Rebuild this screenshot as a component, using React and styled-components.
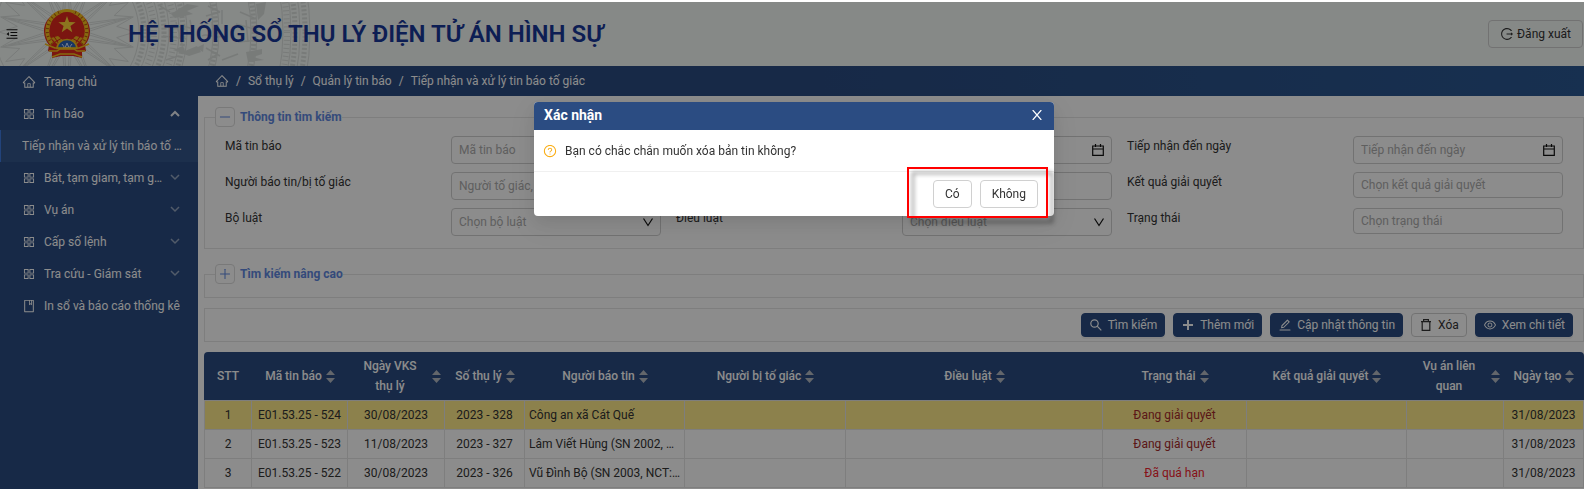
import React from "react";
import styled, { createGlobalStyle, css } from "styled-components";
import {
  AiOutlineMenuFold,
  AiOutlineHome,
  AiOutlineAppstore,
  AiOutlineBook,
  AiOutlineLogout,
  AiOutlinePlus,
  AiOutlineMinus,
  AiOutlineEdit,
  AiOutlineEye,
  AiOutlineQuestionCircle,
} from "react-icons/ai";

const color = {
  primary: "#2b4c82",
  line: "#e6e6e6",
  control: "#d0d0d0",
  text: "#333333",
  hint: "#adadad",
};

const GlobalStyle = createGlobalStyle`
  *, *::before, *::after { box-sizing: border-box; }
  body { margin: 0; background: #fff; }
  body, button, input, select {
    font-family: Roboto, "Liberation Sans", sans-serif;
    font-size: 12px;
    line-height: 20px;
    color: ${color.text};
  }
  svg { display: block; flex: none; }
`;

const Page = styled.div`
  min-height: 100vh;
  display: flex;
  flex-direction: column;
  padding-top: 2px;
`;

/* ---------- header ---------- */

const Header = styled.header`
  position: relative;
  display: flex;
  align-items: center;
  height: 64px;
  padding: 0 1px 0 5px;
  background: #f4f9f6;
  overflow: hidden;
`;

const DrumArt = styled.svg`
  position: absolute;
  left: 0;
  top: 0;
`;

const IconButton = styled.button`
  position: relative;
  display: flex;
  padding: 0;
  border: 0;
  background: none;
  color: #111;
`;

const Emblem = styled.svg`
  position: relative;
  margin: 0 37px 0 24px;
`;

const Title = styled.h1`
  position: relative;
  flex: 1;
  margin: 0;
  font-size: 24px;
  line-height: 32px;
  font-weight: 600;
  color: #183899;
`;

const Button = styled.button`
  display: inline-flex;
  align-items: center;
  justify-content: center;
  gap: ${(p) => (p.$small ? 5 : 3)}px;
  height: ${(p) => (p.$small ? 24 : 28)}px;
  padding: 0 ${(p) => (p.$small ? 7 : 11)}px;
  border: 1px solid ${color.control};
  border-radius: 4px;
  background: #fff;
  color: ${color.text};
  white-space: nowrap;
  ${(p) =>
    p.$primary &&
    css`
      border-color: ${color.primary};
      background: ${color.primary};
      color: #fff;
      box-shadow: 0 2px 0 rgba(0, 0, 0, 0.05);
    `}
  ${(p) => p.$clear && "background: transparent;"}
`;

/* ---------- sidebar ---------- */

const Body = styled.div`
  flex: 1;
  display: flex;
`;

const Sidebar = styled.nav`
  flex: none;
  width: 198px;
  background: ${color.primary};
`;

const MenuItem = styled.a`
  display: flex;
  align-items: center;
  gap: 8px;
  height: 32px;
  padding: 0 ${(p) => (p.$active ? 14 : 18)}px 0 21px;
  border-left: 1px solid ${(p) => (p.$active ? "#3f7be0" : "transparent")};
  background: ${(p) => (p.$active ? "#34568b" : "transparent")};
  color: #fff;
  text-decoration: none;
`;

const MenuText = styled.span`
  flex: 1;
  min-width: 0;
  overflow: hidden;
  text-overflow: ellipsis;
  white-space: nowrap;
`;

/* ---------- content ---------- */

const Main = styled.main`
  flex: 1;
  min-width: 0;
`;

const Breadcrumb = styled.nav`
  display: flex;
  align-items: center;
  gap: 7px;
  height: 30px;
  padding: 0 17px;
  background: linear-gradient(90deg, #2b4c82 45%, #2b5892);
  color: #fff;

  a {
    color: inherit;
    text-decoration: none;
  }
`;

const Content = styled.div`
  padding: 11px 0 0 6px;
`;

const Section = styled.fieldset`
  min-width: 0;
  margin: 0 0 ${(p) => (p.$closed ? 10 : 15)}px;
  padding: ${(p) => (p.$closed ? "0 10px 13px" : "9px 10px 12px")};
  border: 1px solid ${color.line};
`;

const Legend = styled.legend`
  display: flex;
  align-items: center;
  gap: 5px;
  height: 20px;
  padding: 0;
  font-weight: 700;
  color: #6088e0;
`;

const Toggle = styled.button`
  display: flex;
  align-items: center;
  justify-content: center;
  width: 20px;
  height: 20px;
  padding: 0;
  border: 1px solid #dcdcdc;
  border-radius: 4px;
  background: transparent;
  color: #6088e0;
`;

const FormGrid = styled.div`
  display: grid;
  grid-template-columns: repeat(3, minmax(0, 1fr));
  grid-auto-rows: 28px;
  gap: 8px 15px;
  padding: 0 10px;
`;

const Field = styled.div`
  display: grid;
  grid-template-columns: repeat(2, minmax(0, 1fr));
  align-items: start;
  gap: 16px;
`;

const Control = styled.div`
  grid-column: 2;
  display: flex;
  align-items: center;
  height: ${(p) => (p.$short ? 26 : 28)}px;
  padding: 0 7px 0 0;
  border: 1px solid ${color.control};
  border-radius: 4px;
  color: #111;
`;

const controlReset = css`
  flex: 1;
  min-width: 0;
  padding: 0 0 0 7px;
  border: 0;
  outline: 0;
  background: none;
`;

const Input = styled.input`
  ${controlReset}
  &::placeholder { color: ${color.hint}; opacity: 1; }
`;

const Select = styled.select`
  ${controlReset}
  appearance: none;
  color: ${color.hint};
`;

const Toolbar = styled.div`
  display: flex;
  justify-content: flex-end;
  gap: 8px;
  margin-bottom: 10px;
  padding: 4px 10px;
  border: 1px solid ${color.line};
`;

/* ---------- table ---------- */

const Table = styled.table`
  width: 100%;
  table-layout: fixed;
  border-collapse: separate;
  border-spacing: 0;
`;

const Th = styled.th`
  height: 49px;
  padding: 0 4px;
  border-bottom: 1px solid ${color.line};
  background: ${color.primary};
  background-clip: padding-box;
  color: #fff;
  font-weight: 500;
  text-align: center;
  &:first-child { border-top-left-radius: 4px; }
  &:last-child { border-top-right-radius: 4px; }
`;

const HeadCell = styled.div`
  display: flex;
  align-items: center;
  justify-content: center;
  gap: 4px;
`;

const Row = styled.tr`
  background: ${(p) => (p.$selected ? "#ffec8b" : "transparent")};
`;

const Td = styled.td`
  height: 29px;
  padding: 0 4px;
  border-right: 1px solid ${color.line};
  border-bottom: 1px solid ${color.line};
  text-align: ${(p) => (p.$left ? "left" : "center")};
  color: ${(p) => p.$tone || color.text};
  overflow: hidden;
  text-overflow: ellipsis;
  white-space: nowrap;
  &:first-child { border-left: 1px solid ${color.line}; }
`;

/* ---------- dialog ---------- */

const Backdrop = styled.div`
  position: fixed;
  inset: 2px 0 0;
  display: flex;
  align-items: flex-start;
  justify-content: center;
  padding: 100px 0 0 4px;
  background: rgba(0, 0, 0, 0.45);
`;

const Dialog = styled.section`
  position: relative;
  width: 520px;
  border-radius: 4px;
  background: #fff;
  box-shadow: 0 6px 16px rgba(0, 0, 0, 0.08), 0 9px 28px 8px rgba(0, 0, 0, 0.05);
`;

const DialogHead = styled.header`
  display: flex;
  align-items: center;
  justify-content: space-between;
  height: 28px;
  padding: 0 12px 2px 10px;
  border-radius: 4px 4px 0 0;
  background: ${color.primary};
  color: #fff;

  h2 {
    margin: 0;
    font-size: 14px;
    line-height: 20px;
    font-weight: 700;
  }
  button { color: #fff; }
`;

const DialogBody = styled.div`
  display: flex;
  align-items: center;
  gap: 8px;
  height: 42px;
  padding: 0 9px;
  border-bottom: 1px solid #f0f0f0;

  svg { color: #faad14; }
  p { margin: 0; }
`;

const DialogFoot = styled.footer`
  display: flex;
  justify-content: flex-end;
  gap: 8px;
  padding: 8px 16px;
`;

const Highlight = styled.div`
  position: absolute;
  right: 6px;
  bottom: -2px;
  width: 141px;
  height: 51px;
  border: 2px solid #f00;
  filter: drop-shadow(5px 5px 2px rgba(0, 0, 0, 0.45));
  pointer-events: none;
`;

/* ---------- drawings ---------- */

const Chevron = ({ up }) => (
  <svg width="10" height="10" viewBox="0 0 10 10" fill="none" stroke="currentColor" strokeWidth={up ? 2 : 1.5} opacity={up ? 0.9 : 0.5}>
    <path d={up ? "M1 7l4-4 4 4" : "M1 2l4 4 4-4"} />
  </svg>
);

const SelectArrow = () => (
  <svg width="10" height="10" viewBox="0 0 10 10" fill="none" stroke="currentColor" strokeWidth="1.200">
    <path d="M.5 1.500L5 8.500l4.500-7" />
  </svg>
);

const CloseIcon = () => (
  <svg width="10" height="10" viewBox="0 0 10 10" fill="none" stroke="currentColor" strokeWidth="1.200">
    <path d="M.7 0l8.600 10M9.300 0L.7 10" />
  </svg>
);

const SearchIcon = () => (
  <svg width="14" height="14" viewBox="0 0 14 14" fill="none" stroke="currentColor" strokeWidth="1.200">
    <circle cx="5.500" cy="5.500" r="3.700" />
    <path d="M8.200 8.200l4.100 4.100" />
  </svg>
);

const PlusIcon = () => (
  <svg width="14" height="14" viewBox="0 0 14 14" fill="none" stroke="currentColor" strokeWidth="2">
    <path d="M7 2v10M2 7h10" />
  </svg>
);

const CalendarIcon = () => (
  <svg width="12" height="12" viewBox="0 0 12 12" fill="none" stroke="currentColor" strokeWidth="1.200">
    <path d="M.7 2h10.600v9.300H.7zM.7 5h10.600M3.500 0v3M8.500 0v3" />
  </svg>
);

const TrashIcon = () => (
  <svg width="14" height="14" viewBox="0 0 14 14" fill="none" stroke="currentColor" strokeWidth="1.200">
    <path d="M2 3.600h10M4.600 3.400V1.600h4.800v1.800M3.200 3.600v8.800h7.600V3.600" />
  </svg>
);

const Sorter = () => (
  <svg width="9" height="13" viewBox="0 0 9 13" fill="#b4bac4">
    <path d="M4.500 0L9 5H0zM4.500 13L9 8H0z" />
  </svg>
);

const starPath = (cx, cy, outer, inner, points) => {
  const step = Math.PI / points;
  return (
    Array.from({ length: points * 2 }, (_, i) => {
      const r = i % 2 ? inner : outer;
      const a = i * step - Math.PI / 2;
      return `${i ? "L" : "M"}${(cx + r * Math.cos(a)).toFixed(1)} ${(cy + r * Math.sin(a)).toFixed(1)}`;
    }).join("") + "Z"
  );
};

const Drum = () => (
  <DrumArt width="316" height="64" viewBox="0 0 316 64" fill="none" stroke="#8f9391" opacity="0.24" aria-hidden="true">
    <path d={starPath(67, 30, 66, 20, 14)} />
    <path d={starPath(67, 30, 60, 12, 14)} />
    <path d={starPath(67, 30, 68, 50, 28)} />
    {[72, 82, 92, 102, 112, 120, 146, 152, 184, 190, 216, 224, 233, 243].map((r) => (
      <circle key={r} cx="67" cy="30" r={r} />
    ))}
    {[77, 97, 116, 149, 187, 228, 238].map((r) => (
      <circle key={r} cx="67" cy="30" r={r} strokeWidth="5" strokeDasharray="2 2" />
    ))}
    {[87, 107, 220].map((r) => (
      <circle key={r} cx="67" cy="30" r={r} strokeWidth="6" strokeDasharray="1 3" />
    ))}
    <g stroke="none" fill="#8f9391">
      <path d="M171 12l16-10 12 2-12 5 6 3-18 4zM173 48l10-4 2 5 12-5 4 6-12 4-10-4zM196 46l8-4-1 8zM246 50l16-3v5l-9 3 11 3-16 2zM256 2l10-2-2 12-6 6z" />
    </g>
    <g strokeWidth="1.500">
      <path d="M164 24c8 4 16-2 26 2M163 34l24 3M202 34c6-4 12 4 20 0M236 22l22 6M238 40l20-2M160 4l10 6M166 58l12-4M222 58l16-6M208 4l12 6M206 14l14-4M206 46l14 8M208 58l10-6M240 10l14 6M222 8v14M176 20l6 22M190 18l4 20M212 20l2 20M246 18l2 22" />
    </g>
  </DrumArt>
);

const NationalEmblem = () => (
  <Emblem width="48" height="50" viewBox="0 0 48 50" role="img" aria-label="Quốc huy Việt Nam">
    <path d="M24 1C11 1 1 11 1 22c0 6 2 10 5 14l-1 6 4 1v6l9-2h12l9 2v-6l4-1-1-6c3-4 5-8 5-14C47 11 37 1 24 1z" fill="#e0281e" />
    <path d="M9 35A20.500 20.500 0 0 1 17 3M39 35A20.500 20.500 0 0 0 31 3" fill="none" stroke="#f6c21c" strokeWidth="4" />
    <path d="M9 35A20.500 20.500 0 0 1 17 3M39 35A20.500 20.500 0 0 0 31 3" fill="none" stroke="#b85c10" strokeWidth="3" strokeDasharray="1 3" />
    <path d="M17 3q7-3 14 0" fill="none" stroke="#f6c21c" strokeWidth="3" />
    <path d={starPath(24, 16, 9, 3.6, 5)} fill="#ffd83a" />
    <path d="M8 29l7-2 6 5-7 3zM40 29l-7-2-6 5 7 3z" fill="#f2b51b" />
    <path d="M10 26l6 9M38 26l-6 9M12 33l7-4M36 33l-7-4" stroke="#d9241c" />
    <path d="M14 39.500a10 9 0 0 1 20 0z" fill="#2f63b5" stroke="#f6c21c" strokeWidth="1.500" />
    <path d="M19 35l3 4 2-5 2 5 3-4M20 38.500h8" fill="none" stroke="#d8e6ff" />
    <path d="M2 35l10 4h24l10-4M6 42h8l3-2h14l3 2h8M9 48l8-3h14l8 3" fill="none" stroke="#f6c21c" strokeWidth="1.500" />
  </Emblem>
);

/* ---------- data ---------- */

const menu = [
  { text: "Trang chủ", icon: AiOutlineHome },
  { text: "Tin báo", icon: AiOutlineAppstore, arrow: "up" },
  { text: "Tiếp nhận và xử lý tin báo tố giác", active: true },
  { text: "Bắt, tạm giam, tạm giữ", icon: AiOutlineAppstore, arrow: "down" },
  { text: "Vụ án", icon: AiOutlineAppstore, arrow: "down" },
  { text: "Cấp số lệnh", icon: AiOutlineAppstore, arrow: "down" },
  { text: "Tra cứu - Giám sát", icon: AiOutlineAppstore, arrow: "down" },
  { text: "In sổ và báo cáo thống kê", icon: AiOutlineBook },
];

const crumbs = ["Sổ thụ lý", "Quản lý tin báo", "Tiếp nhận và xử lý tin báo tố giác"];

const fields = [
  { id: "code", label: "Mã tin báo", hint: "Mã tin báo" },
  { id: "from", name: "Tiếp nhận từ ngày", date: true },
  { id: "to", label: "Tiếp nhận đến ngày", hint: "Tiếp nhận đến ngày", date: true },
  { id: "person", label: "Người báo tin/bị tố giác", hint: "Người tố giác, bị tố giác" },
  { id: "number", name: "Số thụ lý" },
  { id: "result", label: "Kết quả giải quyết", hint: "Chọn kết quả giải quyết", select: true, short: true },
  { id: "law", label: "Bộ luật", hint: "Chọn bộ luật", select: true, arrow: true },
  { id: "article", label: "Điều luật", hint: "Chọn điều luật", select: true, arrow: true },
  { id: "status", label: "Trạng thái", hint: "Chọn trạng thái", select: true, short: true },
];

const columns = [
  { title: "STT", width: 48, plain: true },
  { title: "Mã tin báo", width: 96 },
  { title: "Ngày VKS thụ\u00a0lý", width: 97 },
  { title: "Số thụ lý", width: 80 },
  { title: "Người báo tin", width: 160 },
  { title: "Người bị tố giác", width: 161 },
  { title: "Điều luật" },
  { title: "Trạng thái", width: 144 },
  { title: "Kết quả giải quyết", width: 160 },
  { title: "Vụ án liên quan", width: 97 },
  { title: "Ngày tạo", width: 80 },
];

const brown = "#a52a2a";
const red = "#f5222d";

const rows = [
  { code: "E01.53.25 - 524", date: "30/08/2023", no: "2023 - 328", name: "Công an xã Cát Quế", status: "Đang giải quyết", tone: brown, created: "31/08/2023" },
  { code: "E01.53.25 - 523", date: "11/08/2023", no: "2023 - 327", name: "Lâm Viết Hùng (SN 2002, NCT: Hà Nội)", status: "Đang giải quyết", tone: brown, created: "31/08/2023" },
  { code: "E01.53.25 - 522", date: "30/08/2023", no: "2023 - 326", name: "Vũ Đình Bộ (SN 2003, NCT: Hà Nội)", status: "Đã quá hạn", tone: red, created: "31/08/2023" },
];

const FormField = ({ id, label, name, hint, select, date, short, arrow }) => (
  <Field>
    {label && <label htmlFor={id}>{label}</label>}
    <Control $short={short}>
      {select ? (
        <Select id={id} defaultValue="">
          <option value="">{hint}</option>
        </Select>
      ) : (
        <Input id={id} type="text" placeholder={hint} aria-label={name} />
      )}
      {date && <CalendarIcon />}
      {arrow && <SelectArrow />}
    </Control>
  </Field>
);

export default function App() {
  return (
    <>
      <GlobalStyle />
      <Page>
        <Header>
          <Drum />
          <IconButton type="button" aria-label="Thu gọn menu">
            <AiOutlineMenuFold size={14} />
          </IconButton>
          <NationalEmblem />
          <Title>HỆ THỐNG SỔ THỤ LÝ ĐIỆN TỬ ÁN HÌNH SỰ</Title>
          <Button type="button" $clear>
            <AiOutlineLogout size={14} />
            Đăng xuất
          </Button>
        </Header>

        <Body>
          <Sidebar>
            {menu.map(({ text, icon: Icon, arrow, active }) => (
              <MenuItem key={text} href="#" $active={active}>
                {Icon && <Icon size={14} />}
                <MenuText>{text}</MenuText>
                {arrow && <Chevron up={arrow === "up"} />}
              </MenuItem>
            ))}
          </Sidebar>

          <Main>
            <Breadcrumb>
              <a href="#" aria-label="Trang chủ">
                <AiOutlineHome size={14} />
              </a>
              {crumbs.map((c) => (
                <React.Fragment key={c}>
                  <span>/</span>
                  <a href="#">{c}</a>
                </React.Fragment>
              ))}
            </Breadcrumb>

            <Content>
              <Section>
                <Legend>
                  <Toggle type="button" aria-label="Thu gọn">
                    <AiOutlineMinus size={14} />
                  </Toggle>
                  Thông tin tìm kiếm
                </Legend>
                <FormGrid>
                  {fields.map((f) => (
                    <FormField key={f.id} {...f} />
                  ))}
                </FormGrid>
              </Section>

              <Section $closed>
                <Legend>
                  <Toggle type="button" aria-label="Mở rộng">
                    <AiOutlinePlus size={14} />
                  </Toggle>
                  Tìm kiếm nâng cao
                </Legend>
              </Section>

              <Toolbar>
                <Button type="button" $small $primary>
                  <SearchIcon />
                  Tìm kiếm
                </Button>
                <Button type="button" $small $primary>
                  <PlusIcon />
                  Thêm mới
                </Button>
                <Button type="button" $small $primary>
                  <AiOutlineEdit size={14} />
                  Cập nhật thông tin
                </Button>
                <Button type="button" $small $clear>
                  <TrashIcon />
                  Xóa
                </Button>
                <Button type="button" $small $primary>
                  <AiOutlineEye size={14} />
                  Xem chi tiết
                </Button>
              </Toolbar>

              <Table>
                <colgroup>
                  {columns.map((c) => (
                    <col key={c.title} width={c.width} />
                  ))}
                </colgroup>
                <thead>
                  <tr>
                    {columns.map((c) => (
                      <Th key={c.title} scope="col">
                        <HeadCell>
                          <span>{c.title}</span>
                          {!c.plain && <Sorter />}
                        </HeadCell>
                      </Th>
                    ))}
                  </tr>
                </thead>
                <tbody>
                  {rows.map((r, i) => (
                    <Row key={r.code} $selected={i === 0}>
                      <Td>{i + 1}</Td>
                      <Td>{r.code}</Td>
                      <Td>{r.date}</Td>
                      <Td>{r.no}</Td>
                      <Td $left>{r.name}</Td>
                      <Td />
                      <Td />
                      <Td $tone={r.tone}>{r.status}</Td>
                      <Td />
                      <Td />
                      <Td>{r.created}</Td>
                    </Row>
                  ))}
                </tbody>
              </Table>
            </Content>
          </Main>
        </Body>
      </Page>

      <Backdrop>
        <Dialog role="dialog" aria-modal="true" aria-labelledby="confirm-title">
          <DialogHead>
            <h2 id="confirm-title">Xác nhận</h2>
            <IconButton type="button" aria-label="Đóng">
              <CloseIcon />
            </IconButton>
          </DialogHead>
          <DialogBody>
            <AiOutlineQuestionCircle size={14} />
            <p>Bạn có chắc chắn muốn xóa bản tin không?</p>
          </DialogBody>
          <DialogFoot>
            <Button type="button">Có</Button>
            <Button type="button">Không</Button>
          </DialogFoot>
          <Highlight />
        </Dialog>
      </Backdrop>
    </>
  );
}
